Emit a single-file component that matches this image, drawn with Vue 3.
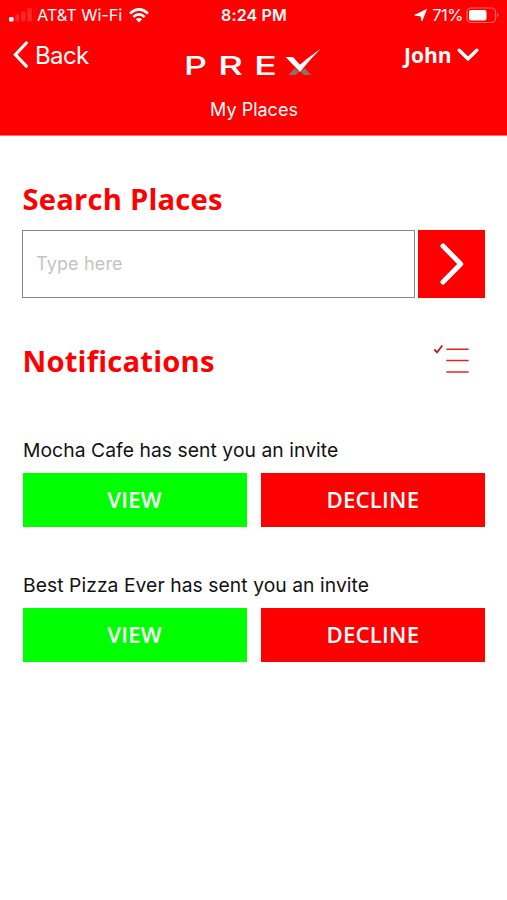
<script setup>
const invites = ['Mocha Cafe', 'Best Pizza Ever']
</script>

<template>
  <div class="screen">
    <header class="header">
      <div class="status">
        <div class="carrier">
          <svg class="signal" width="24" height="14" viewBox="0 0 24 14" fill="#fff">
            <rect x="0" y="9" width="4.6" height="4.5" rx="1.2" />
            <g opacity=".17">
              <rect x="6.3" y="6.5" width="4" height="7" rx="1" />
              <rect x="12.3" y="3.5" width="4.2" height="10" rx="1" />
              <rect x="18.5" y="0" width="4.2" height="13.5" rx="1" />
            </g>
          </svg>
          <span class="network">AT&amp;T Wi-Fi</span>
          <svg width="20" height="15" viewBox="0 0 20 15" fill="none" stroke="#fff" stroke-width="2.6">
            <path d="M1 5.4Q10-2.5 19 5.4M4.3 8.9Q10 4 15.7 8.9" />
            <path d="M6.8 11.3Q10 8.7 13.2 11.3L10 14.5Z" fill="#fff" stroke="none" />
          </svg>
        </div>
        <span class="clock">8:24 PM</span>
        <div class="power">
          <svg class="locate" width="13" height="13" viewBox="0 0 13 13"><path d="M12.4.6 7.9 12 6.9 6.9.8 6.2Z" fill="#fff" stroke="#fff" stroke-width=".9" stroke-linejoin="round" /></svg>
          <span class="percent">71%</span>
          <svg width="33" height="17" viewBox="0 0 33 17">
            <rect x="1" y="1" width="28.5" height="14.5" rx="4" fill="none" stroke="#fff" stroke-opacity=".4" stroke-width="1.2" />
            <rect x="3" y="3" width="17.5" height="10.5" rx="2" fill="#fff" />
            <path d="M31 5.7Q33.5 8.2 31 10.7Z" fill="#fff" opacity=".5" />
          </svg>
        </div>
      </div>
      <div class="nav">
        <div class="back">
          <svg width="16" height="30" viewBox="0 0 16 30" fill="none" stroke="#fff" stroke-width="3.2" stroke-linecap="round"><path d="M14.3 3 3.4 14.7 14.3 26.2" /></svg>
          <span>Back</span>
        </div>
        <svg class="logo" width="150" height="42" viewBox="-5 0 150 42">
          <g class="logo-text" fill="#fff">
            <text x="-1" y="28.7" textLength="23" lengthAdjust="spacingAndGlyphs">P</text>
            <text x="33" y="28.7" textLength="25" lengthAdjust="spacingAndGlyphs">R</text>
            <text x="69" y="28.7" textLength="23" lengthAdjust="spacingAndGlyphs">E</text>
          </g>
          <path d="M103.5 29 109.5 22.2 114 25.5 110.5 29ZM126 29 120 22.2 115.5 25.5 119 29Z" fill="#8b7068" />
          <path d="M100.5 11H108L115 18.7 121 13.5 136 2.5 126 13 115 26Z" fill="#fff" />
        </svg>
        <div class="user">
          <span>John</span>
          <svg width="22" height="14" viewBox="0 0 22 14" fill="none" stroke="#fff" stroke-width="3.4" stroke-linecap="round"><path d="M2.2 2.2 11 10.8 19.8 2.2" /></svg>
        </div>
      </div>
      <div class="title">My Places</div>
    </header>
    <main>
      <h2>Search Places</h2>
      <div class="search">
        <input type="text" placeholder="Type here" />
        <button class="go">
          <svg width="28" height="44" viewBox="0 0 28 44" fill="none" stroke="#fff" stroke-width="5" stroke-linecap="round" stroke-linejoin="round"><path d="M5 4 22.7 22 5 40" /></svg>
        </button>
      </div>
      <div class="section-head">
        <h2 class="notes">Notifications</h2>
        <svg width="36" height="30" viewBox="0 0 36 30" fill="none" stroke="#df2424" stroke-width="1.5"><path d="M13.3 5.2H35.6M13.3 16.6H35.6M13.3 28H35.6" /><path d="M1.3 5.5 4.1 8.3 9.3 1.5" stroke="#c01c1c" stroke-width="1.8" /></svg>
      </div>
      <section v-for="name in invites" :key="name" class="invite">
        <p>{{ name }} has sent you an invite</p>
        <div class="actions">
          <button class="view">VIEW</button>
          <button class="decline">DECLINE</button>
        </div>
      </section>
    </main>
  </div>
</template>

<style>
body { margin: 0; background: #fff; }
</style>

<style scoped>
* { box-sizing: border-box; }
svg { display: block; flex: none; }
.screen { width: 507px; height: 900px; background: #fff; font-family: Inter, sans-serif; overflow: hidden; }
.header { height: 136px; background: #f00; color: #fff; border-bottom: 1px solid #ff6b6b; }
.status { height: 30px; display: grid; grid-template-columns: 1fr auto 1fr; align-items: center; padding: 0 8px 0 9px; font-size: 17px; line-height: 30px; }
.carrier, .power { display: flex; align-items: center; }
.network { margin: 0 7px 0 4px; font-size: 16.5px; letter-spacing: -.15px; }
.clock { font-size: 16px; font-weight: 600; letter-spacing: .15px; }
.power { justify-content: flex-end; }
.percent { margin: 0 3px 0 5px; font-size: 16.5px; letter-spacing: -.5px; }
.nav { height: 56px; display: grid; grid-template-columns: 180px 150px 1fr; padding-top: 10px; }
.back { display: flex; align-items: center; height: 30px; padding-left: 12px; gap: 7px; font-size: 24px; letter-spacing: -.6px; }
.logo { margin-top: 6px; }
.logo-text { font: 500 25.5px Inter, sans-serif; }
.user { display: flex; align-items: center; height: 30px; padding-left: 74px; gap: 5px; font: 700 21px/30px "Open Sans", sans-serif; }
.title { padding-left: 1px; text-align: center; font-size: 18px; line-height: 26px; margin-top: 11px; }
main { padding: 41px 22px 0; }
h2 { margin: 0; font: 700 29.2px/44px "Open Sans", sans-serif; letter-spacing: .2px; padding-left: .5px; color: #f00; }
.search { display: flex; gap: 3px; margin-top: 9px; height: 68px; }
input { width: 393px; height: 68px; border: 1.5px solid #888; border-radius: 0; padding: 0 13px 2px; font: 18px Inter, sans-serif; letter-spacing: .15px; background: #fff; outline: 0; }
input::placeholder { color: #c4c4c4; opacity: 1; }
button { border: 0; padding: 0; border-radius: 0; color: #fff; background: #f00; }
.go { width: 67px; display: grid; place-items: center; }
.section-head { height: 44px; margin-top: 41px; display: flex; align-items: center; justify-content: space-between; padding-right: 16px; }
.section-head svg { margin-top: -5px; }
.invite { height: 135px; }
.section-head + .invite { margin-top: 54px; }
.invite p { margin: 0; padding-left: 1px; font-size: 19.3px; line-height: 26px; letter-spacing: .06px; color: #111; }
.actions { display: grid; grid-template-columns: 1fr 1fr; gap: 14px; margin-top: 10px; padding-left: .5px; }
.actions button { height: 54px; padding-bottom: 1px; font: 600 22.2px/53px "Open Sans", sans-serif; letter-spacing: .2px; }
.actions .view { background: #0f0; }
</style>
